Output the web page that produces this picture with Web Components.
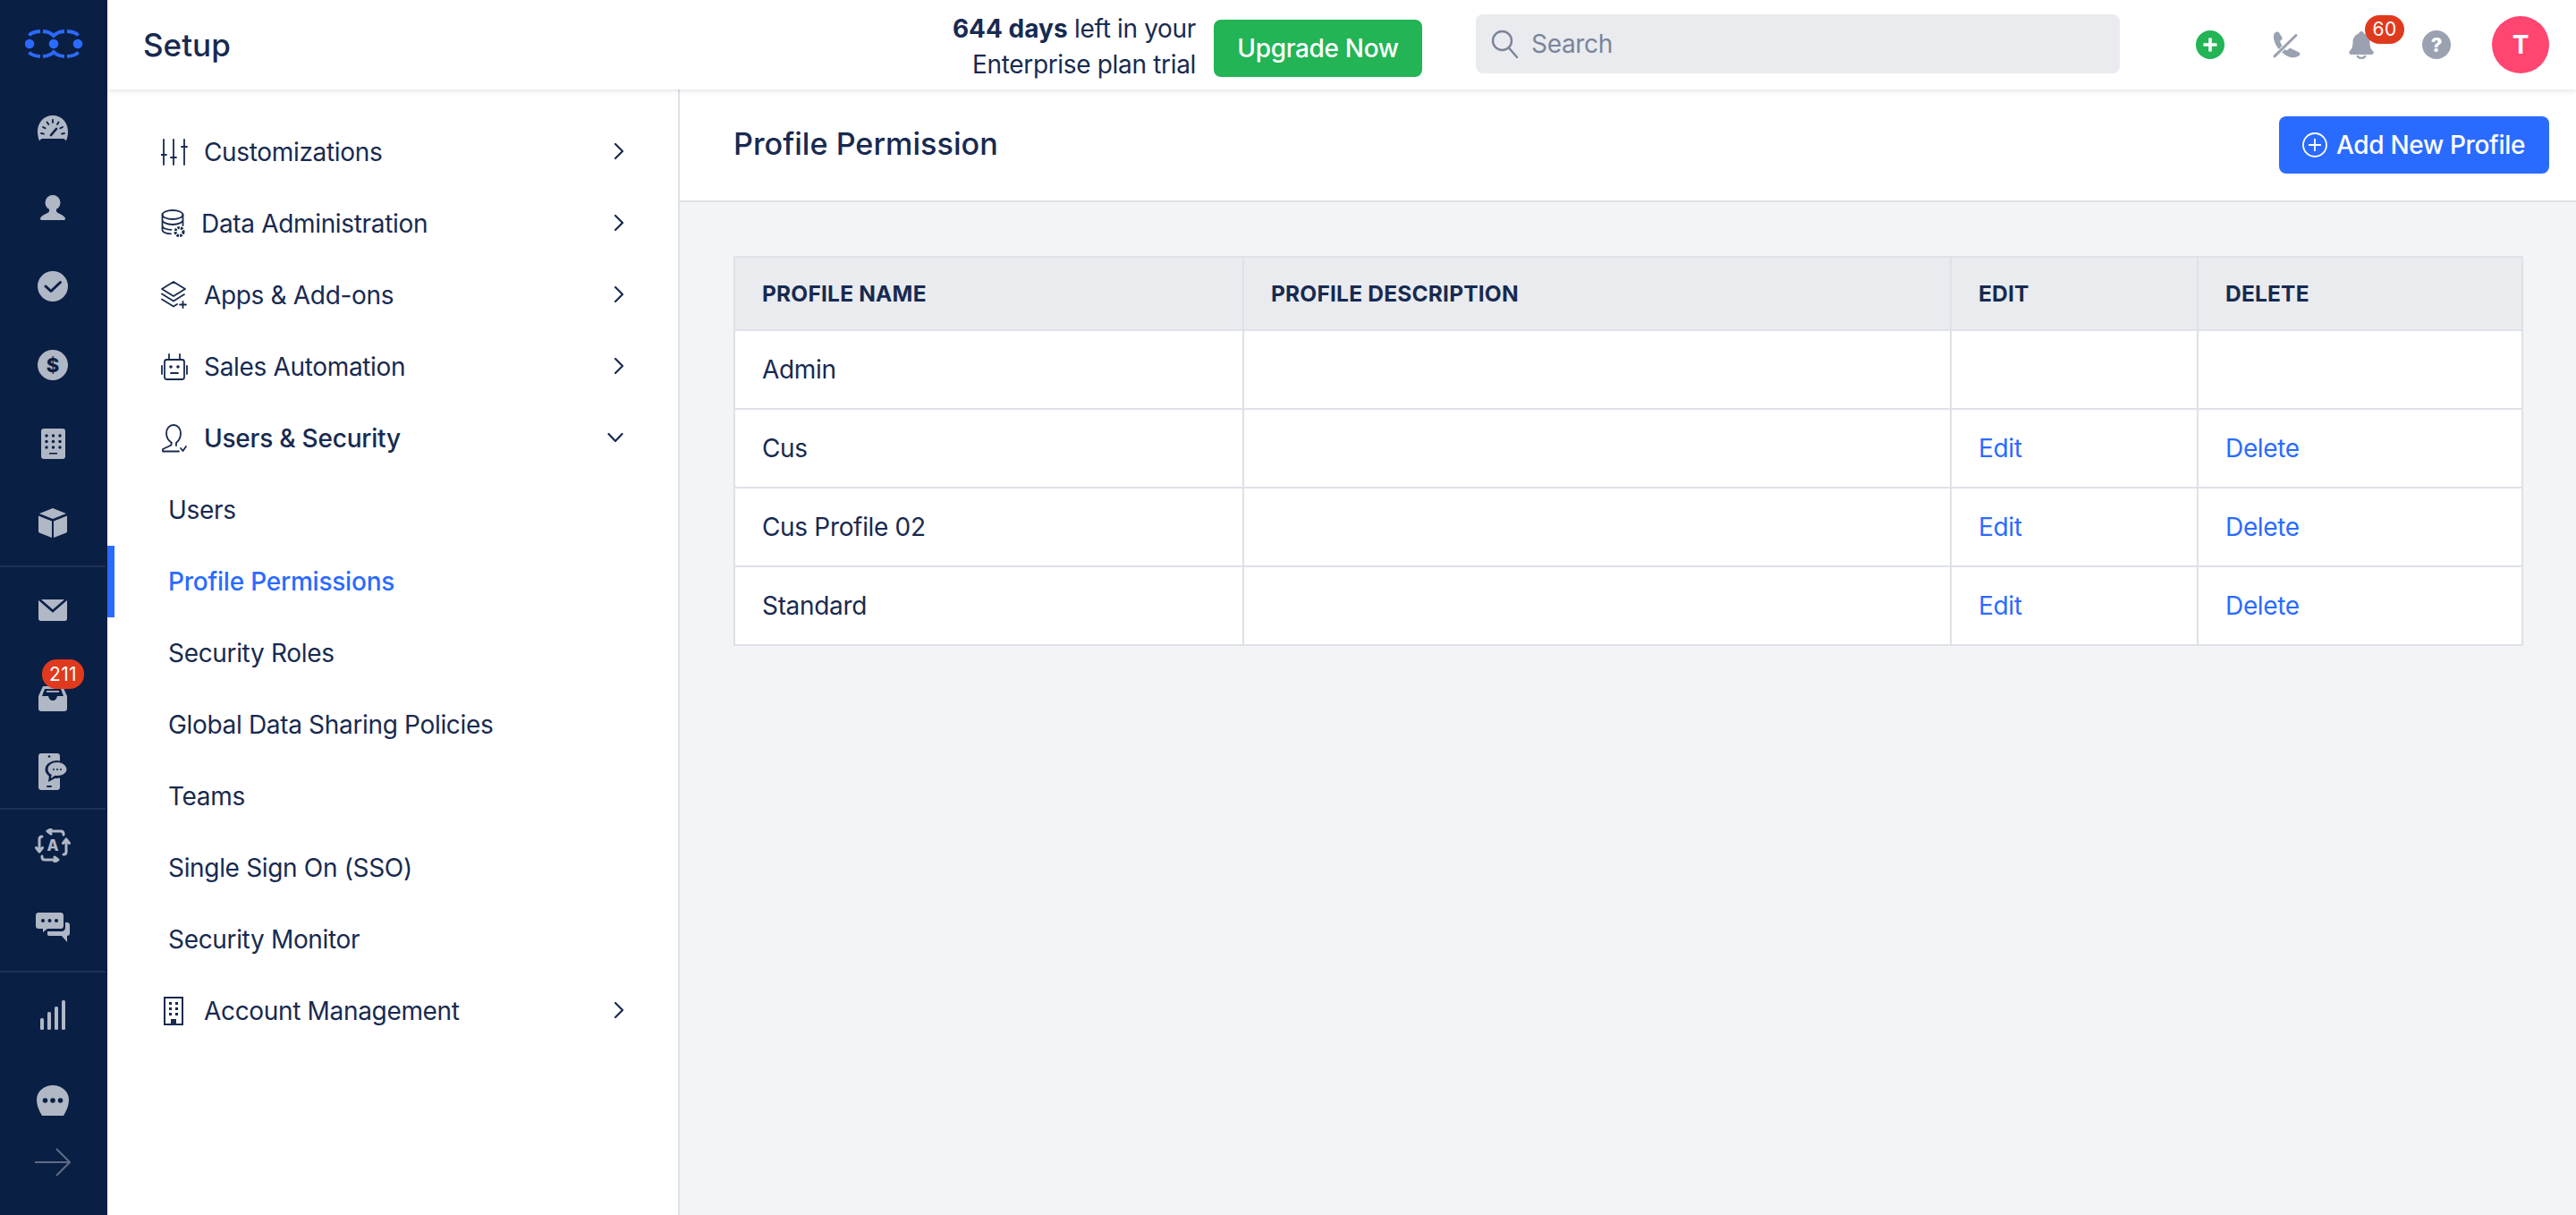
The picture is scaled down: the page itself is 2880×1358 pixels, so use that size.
<!DOCTYPE html>
<html lang="en">
<head>
<meta charset="utf-8">
<title>Profile Permission</title>
<style>
    html, body { margin: 0; height: 100%; }
    body { font-family: Inter, "Liberation Sans", sans-serif; color: #182a50; overflow: hidden; }
</style>
</head>
<body>
<crm-app>
    <crm-rail slot="rail"></crm-rail>
    <top-bar slot="top"></top-bar>
    <setup-nav slot="nav"></setup-nav>
    <page-head slot="main" heading="Profile Permission" action="Add New Profile"></page-head>
    <profile-table slot="main"></profile-table>
</crm-app>

<script>
// Icons drawn at their real pixel size.
const G = '#b0b7c5', D = '#0a1f44', S = '#182a50';
const line = `fill="none" stroke="${S}" stroke-width="1.8" stroke-linecap="round" stroke-linejoin="round"`;
const ICONS = {
    logo: `<svg width="66" height="34" viewBox="0 0 66 34"><g fill="#2a6bff"><circle cx="5" cy="17" r="5.300"/><circle cx="32" cy="17" r="5.300"/><circle cx="59" cy="17" r="5.300"/></g><g fill="none" stroke="#2a6bff" stroke-width="3.800"><path d="M4.500 7.500Q8 3.500 17 3M20 3Q28 3.500 32 8Q36 3.500 44 3M47 3Q56 3.500 59.500 7.500"/><path d="M4.500 26.500Q8 30.500 17 31M20 31Q28 30.500 32 26Q36 30.500 44 31M47 31Q56 30.500 59.500 26.500"/></g></svg>`,
    gauge: `<svg width="34" height="30" viewBox="0 0 34 30"><path fill="${G}" d="M17 0C7 0 0 8 0 18c0 4 .8 7 2 10.500 1-1.500 2-2.500 3.500-2.500h23c1.500 0 2.500 1 3.500 2.500C33.200 25 34 22 34 18 34 8 27 0 17 0z"/><path fill="none" stroke="${D}" stroke-width="1.800" stroke-linecap="round" d="M4 20l3 .6M6 13l2.600 1.400M10.500 7.500l1.800 2.500M17 5v3M23.500 7.500L22 10M28 13l-2.600 1.400M30 20l-3 .6"/><path fill="none" stroke="${D}" stroke-width="2.600" stroke-linecap="round" d="M15 22l6-7"/></svg>`,
    person: `<svg width="28" height="28" viewBox="0 0 28 28"><ellipse fill="${G}" cx="14" cy="8.500" rx="8.500" ry="8.500"/><path fill="${G}" d="M10 15h8v3c0 2 7 3.500 9.500 7 .8 1.300.5 3-1 3H1.500c-1.500 0-1.800-1.700-1-3C3 21.500 10 20 10 18z"/></svg>`,
    check: `<svg width="34" height="34" viewBox="0 0 34 34"><circle cx="17" cy="17" r="17" fill="${G}"/><path d="M9 17l6 5.500L25.500 12.500" fill="none" stroke="${D}" stroke-width="3" stroke-linecap="round" stroke-linejoin="round"/></svg>`,
    dollar: `<svg width="34" height="34" viewBox="0 0 34 34"><circle cx="17" cy="17" r="17" fill="${G}"/><text x="17" y="25" text-anchor="middle" font-family="Inter" font-weight="800" font-size="22" fill="${D}">$</text></svg>`,
    calc: `<svg width="27" height="34" viewBox="0 0 27 34"><rect width="27" height="34" rx="3" fill="${G}"/><g fill="${D}"><circle cx="6" cy="8" r="1.700"/><circle cx="13.500" cy="8" r="1.700"/><circle cx="21" cy="8" r="1.700"/><circle cx="6" cy="14.500" r="1.700"/><circle cx="13.500" cy="14.500" r="1.700"/><circle cx="21" cy="14.500" r="1.700"/><circle cx="6" cy="21" r="1.700"/><circle cx="13.500" cy="21" r="1.700"/><circle cx="21" cy="21" r="1.700"/><rect x="9" y="27" width="9" height="1.600"/></g></svg>`,
    box: `<svg width="32" height="33" viewBox="0 0 32 33"><path fill="${G}" d="M16 0l15 6-15 6L1 6zM0 8.500l15 6V33L1 27.500c-.6-.2-1-.8-1-1.500zM32 8.500l-15 6V33l14-5.500c.6-.2 1-.8 1-1.500z"/></svg>`,
    mail: `<svg width="32" height="24" viewBox="0 0 32 24"><path fill="${G}" d="M2 0h28c1.200 0 2 .8 2 2v19.500c0 1.400-1.100 2.500-2.500 2.500h-27C1.100 24 0 22.900 0 21.500V2c0-1.200.8-2 2-2z"/><path d="M1 0L16 13 31 0" fill="none" stroke="${D}" stroke-width="2.600"/></svg>`,
    inbox: `<svg width="32" height="28" viewBox="0 0 32 28"><path fill="${G}" d="M5 0h22l5 11v14c0 1.700-1.300 3-3 3H3c-1.700 0-3-1.300-3-3V11z"/><path fill="${D}" d="M7 3h18l3 8h-7c-.5 3-2.500 5-5 5s-4.500-2-5-5H4z"/><rect x="9" y="5" width="14" height="1.800" fill="${G}"/></svg>`,
    phonechat: `<svg width="32" height="41" viewBox="0 0 32 41"><path fill="${G}" d="M3 0h18c1.700 0 3 1.300 3 3v35c0 1.700-1.300 3-3 3H3c-1.700 0-3-1.300-3-3V3c0-1.700 1.300-3 3-3z"/><circle cx="12" cy="3.500" r="1.300" fill="${D}"/><rect x="9" y="36" width="6" height="2" rx="1" fill="${D}"/><ellipse cx="20.500" cy="18" rx="13" ry="10" fill="${D}"/><path fill="${D}" d="M12 24l-1 8 9-5z"/><path fill="${G}" d="M21 10c-6 0-10.500 3.300-10.500 8 0 2.500 1.700 4.700 4.200 6l-.7 4 4.500-3.200c.8.100 1.700.2 2.500.2 6 0 10.500-3.300 10.500-7S27 10 21 10z"/><g fill="${D}"><circle cx="17" cy="18" r="1"/><circle cx="21" cy="18" r="1"/><circle cx="25" cy="18" r="1"/></g></svg>`,
    auto: `<svg width="40" height="38" viewBox="0 0 40 38"><g fill="none" stroke="${G}" stroke-width="3" stroke-linecap="round" stroke-linejoin="round"><path d="M14 3H29c2 0 3 1 3 3v1M14 3l4-2.500M14 3l4 3"/><path d="M26 35H11c-2 0-3-1-3-3v-1M26 35l-4 2.500M26 35l-4-3"/><path d="M5 26V12c0-2 1-3 3-3M5 26L1.500 21.500M5 26l3.500-4.500"/><path d="M35 12v14c0 2-1 3-3 3M35 12l-3.500 4.500M35 12l3.500 4.500"/></g><text x="20" y="25" text-anchor="middle" font-family="Inter" font-weight="800" font-size="17" fill="${G}">A</text></svg>`,
    chat: `<svg width="38" height="33" viewBox="0 0 38 33"><path fill="${G}" d="M3 0h25c1.700 0 3 1.300 3 3v12c0 1.700-1.300 3-3 3H13l-5 4v-4H3c-1.700 0-3-1.300-3-3V3c0-1.700 1.300-3 3-3z"/><g fill="${D}"><circle cx="8" cy="9" r="2"/><circle cx="15.500" cy="9" r="2"/><circle cx="23" cy="9" r="2"/></g><path fill="${G}" d="M33 11h2c1.700 0 3 1.300 3 3v9c0 1.700-1.300 3-3 3v7l-6-7H15c-.8 0-1.500-.3-2-1v-4h16c2.200 0 4-1.800 4-4z"/></svg>`,
    bars: `<svg width="28" height="33" viewBox="0 0 28 33" fill="${G}"><rect y="20" width="4" height="13" rx="1.500"/><rect x="8" y="13" width="4" height="20" rx="1.500"/><rect x="16" y="7" width="4" height="26" rx="1.500"/><rect x="24" y="0" width="4" height="33" rx="1.500"/></svg>`,
    more: `<svg width="36" height="34" viewBox="0 0 36 34"><path fill="${G}" d="M18 0c10 0 18 7 18 16 0 7-3 13-6 18H6C3 29 0 23 0 16 0 7 8 0 18 0z"/><g fill="${D}"><circle cx="9.500" cy="17" r="2.800"/><circle cx="18" cy="17" r="2.800"/><circle cx="26.500" cy="17" r="2.800"/></g></svg>`,
    arrow: `<svg width="40" height="32" viewBox="0 0 40 32"><path d="M0 16H39M24 1l15 15-15 15" fill="none" stroke="#5f6c85" stroke-width="2"/></svg>`,

    sliders: `<svg width="30" height="30" viewBox="0 0 30 30"><path ${line} d="M3 1v28M14 1v28M26 1v28M0 18h6M11 21h6M23 9h6"/></svg>`,
    database: `<svg width="28" height="32" viewBox="0 0 28 32"><g ${line}><ellipse cx="13" cy="6" rx="11.500" ry="5"/><path d="M1.500 6v17c0 2.500 4 4 9.500 4.300M24.500 6v12M1.500 12c0 2.500 5 5 11.500 5s11.500-2.500 11.500-5M1.500 18c0 2.500 4 4.500 10 4.800"/></g><circle cx="20.500" cy="25" r="4.500" fill="none" stroke="${S}" stroke-width="3" stroke-dasharray="2.500 1.200"/></svg>`,
    layers: `<svg width="30" height="32" viewBox="0 0 30 32"><g ${line}><path d="M14 1L27 9 14 17 1 9zM1 14.500l13 8 12-7.400M1 20.500l13 8 4-2.500M24.500 23v7M21 26.500h7"/></g></svg>`,
    robot: `<svg width="30" height="32" viewBox="0 0 30 32"><g ${line}><rect x="4" y="8" width="22" height="22" rx="2.500"/><path d="M9 8V2M21 8V2M1 15v9M29 15v9M11 23h8"/></g><circle cx="11" cy="16" r="1.800" fill="${S}"/><circle cx="19" cy="16" r="1.800" fill="${S}"/></svg>`,
    user: `<svg width="30" height="32" viewBox="0 0 30 32"><g ${line}><path d="M12 21c-3-2-6-6-6-11C6 5 9.500 1 14 1s8 4 8 9c0 5-2.500 9-5 11v3M11.500 21v2.500L2 28v2.500h18"/><path d="M22 27l2.500 3 3.500-5"/></g></svg>`,
    building: `<svg width="22" height="32" viewBox="0 0 22 32"><rect x="1" y="1" width="20" height="30" fill="none" stroke="${S}" stroke-width="2"/><g fill="${S}"><rect x="6" y="6" width="3" height="3"/><rect x="13" y="6" width="3" height="3"/><rect x="6" y="12" width="3" height="3"/><rect x="13" y="12" width="3" height="3"/><rect x="6" y="18" width="3" height="3"/><rect x="13" y="18" width="3" height="3"/><rect x="8" y="25" width="6" height="6"/></g></svg>`,
    right: `<svg width="12" height="20" viewBox="0 0 12 20"><path d="M2 2l8 8-8 8" fill="none" stroke="${S}" stroke-width="2.200" stroke-linecap="round" stroke-linejoin="round"/></svg>`,
    down: `<svg width="18" height="12" viewBox="0 0 18 12"><path d="M1.500 2L9 10l7.500-8" fill="none" stroke="${S}" stroke-width="2.200" stroke-linecap="round" stroke-linejoin="round"/></svg>`,

    search: `<svg width="30" height="32" viewBox="0 0 30 32"><circle cx="12.500" cy="12.500" r="10.500" fill="none" stroke="#7b8499" stroke-width="2.400"/><path d="M20 20.500L29 31" fill="none" stroke="#7b8499" stroke-width="2.400" stroke-linecap="round"/></svg>`,
    plus: `<svg width="32" height="32" viewBox="0 0 32 32"><circle cx="16" cy="16" r="16" fill="#22b455"/><path d="M16 8.500v15M8.500 16h15" stroke="#fff" stroke-width="3.600"/></svg>`,
    call: `<svg width="31" height="30" viewBox="0 0 31 30"><path fill="#9aa1b1" d="M2 2C3.500.5 6-.2 7 1.500L10.500 7C11 8 10.500 9 9.500 9.800L8 11C9 14 12 19 15.500 21.500L18 19.500C19 18.800 20 19 21 19.500L29.500 23.500C31 24.500 30.500 26.500 29 27.500 25 30 20 30 15 27 8 23 3 16 1.500 10 .8 7 .5 4 2 2z"/><path d="M1 29L26 4.500" stroke="#fff" stroke-width="5"/><path d="M2 27.800L26 4.500" stroke="#9aa1b1" stroke-width="3" stroke-linecap="round"/></svg>`,
    bell: `<svg width="28" height="31" viewBox="0 0 28 31"><path fill="#9aa1b1" d="M14 0c1.500 0 2.500 1 3 2.500 4.500 1.500 6.500 5.500 6.500 10 0 5 1.500 7.500 3.500 9.500 1.300 1.300.7 4-1.500 4H2.500C.3 26-.3 23.300 1 22c2-2 3.500-4.500 3.500-9.500 0-4.500 2-8.500 6.500-10C11.500 1 12.500 0 14 0z"/><path fill="none" stroke="#9aa1b1" stroke-width="2.400" d="M9.500 27c.5 2 2.300 3 4.500 3s4-1 4.500-3"/></svg>`,
    help: `<svg width="32" height="32" viewBox="0 0 32 32"><circle cx="16" cy="16" r="16" fill="#9aa1b1"/><text x="16" y="24" text-anchor="middle" font-family="Inter" font-weight="800" font-size="22" fill="#fff">?</text></svg>`,
    addcircle: `<svg width="28" height="28" viewBox="0 0 28 28"><circle cx="14" cy="14" r="13" fill="none" stroke="#fff" stroke-width="1.800"/><path d="M14 7v14M7 14h14" stroke="#fff" stroke-width="1.800"/></svg>`
};

class CrmApp extends HTMLElement {
    constructor() {
        super();
        this.attachShadow({ mode: 'open' });
        this.shadowRoot.innerHTML = `
            <style>
                :host { display: grid; grid-template-columns: 120px 1fr; height: 1358px; }
                .rail { grid-row: 1 / 2; min-height: 0; }
                .right { display: flex; flex-direction: column; min-width: 0; }
                .top { position: relative; z-index: 2; }
                .body { flex: 1; display: flex; min-height: 0; }
                .main { flex: 1; background: #f3f4f6; min-width: 0; }
            </style>
            <div class="rail"><slot name="rail"></slot></div>
            <div class="right">
                <div class="top"><slot name="top"></slot></div>
                <div class="body">
                    <slot name="nav"></slot>
                    <div class="main"><slot name="main"></slot></div>
                </div>
            </div>
        `;
    }
}

class AppBadge extends HTMLElement {
    constructor() {
        super();
        this.attachShadow({ mode: 'open' });
        this.shadowRoot.innerHTML = `
            <style>
                :host {
                    position: absolute; display: flex; align-items: center; justify-content: center;
                    background: #e03a1e; color: #fff; border-radius: 16px; height: 32px;
                    font-size: 21px; letter-spacing: .3px;
                }
            </style>
            <slot></slot>
        `;
    }
}

class RailItem extends HTMLElement {
    constructor() {
        super();
        this.attachShadow({ mode: 'open' });
    }

    connectedCallback() {
        this.shadowRoot.innerHTML = `
            <style>
                :host { position: relative; display: flex; height: 72px; align-items: center; justify-content: center; }
                svg { display: block; }
            </style>
            ${ICONS[this.getAttribute('icon')]}
            <slot></slot>
        `;
    }
}

class CrmRail extends HTMLElement {
    constructor() {
        super();
        this.attachShadow({ mode: 'open' });
        this.shadowRoot.innerHTML = `
            <style>
                :host { display: flex; flex-direction: column; height: 1358px; background: #0a1f44; font-family: Inter, sans-serif; }
                .logo { height: 100px; display: flex; align-items: center; padding-left: 28px; box-sizing: border-box; }
                .logo svg { display: block; margin-top: -2px; }
                .group { display: flex; flex-direction: column; width: 118px; border-bottom: 2px solid #1f3254; }
                .last { border-bottom: 0; }
                .a { padding: 8px 0 12px; gap: 16px; }
                .b { padding: 12px 0 5px; }
                .c { padding: 4px 0 13px; }
                .d { padding-top: 11px; }
            </style>
            <div class="logo">${ICONS.logo}</div>
            <div class="group a">
                <rail-item icon="gauge"></rail-item>
                <rail-item icon="person"></rail-item>
                <rail-item icon="check"></rail-item>
                <rail-item icon="dollar"></rail-item>
                <rail-item icon="calc"></rail-item>
                <rail-item icon="box"></rail-item>
            </div>
            <div class="group b">
                <rail-item icon="mail"></rail-item>
                <rail-item icon="inbox" style="margin-top:27px"><app-badge style="left:47px;top:-8px;width:47px;height:33px">211</app-badge></rail-item>
                <rail-item icon="phonechat" style="margin-top:9px"></rail-item>
            </div>
            <div class="group c">
                <rail-item icon="auto"></rail-item>
                <rail-item icon="chat" style="margin-top:19px"></rail-item>
            </div>
            <div class="group d last">
                <rail-item icon="bars"></rail-item>
                <rail-item icon="more" style="margin-top:24px"></rail-item>
                <rail-item icon="arrow" style="margin-top:-3px"></rail-item>
            </div>
        `;
    }
}

class TopBar extends HTMLElement {
    constructor() {
        super();
        this.attachShadow({ mode: 'open' });
        this.shadowRoot.innerHTML = `
            <style>
                :host {
                    display: flex; align-items: center; height: 100px; background: #fff;
                    box-shadow: 0 2px 5px rgba(20, 38, 75, .12); font-size: 28px; letter-spacing: -.33px;
                    padding: 0 30px 0 40px; box-sizing: border-box;
                }
                svg { display: block; }
                h1 { margin: 0; font-size: 35px; font-weight: 500; flex: 1; letter-spacing: 0; }
                .trial { text-align: right; line-height: 40px; margin-right: 20px; margin-top: 3px; }
                b { font-weight: 700; letter-spacing: 0; }
                .upgrade {
                    background: #22b455; color: #fff; height: 64px; width: 233px; border-radius: 8px;
                    display: flex; align-items: center; justify-content: center; font-weight: 500;
                    margin-top: 8px; margin-right: 60px;
                }
                .search {
                    width: 720px; height: 66px; background: #e9ebef; border-radius: 8px; margin-right: 85px;
                    display: flex; align-items: center; gap: 15px; padding-left: 17px; box-sizing: border-box;
                    color: #7b8499; margin-top: -2px;
                }
                .icons { display: flex; align-items: center; }
                .slot { position: relative; }
                .avatar {
                    width: 64px; height: 64px; border-radius: 50%; background: #ff4570; color: #fff;
                    display: flex; align-items: center; justify-content: center; font-weight: 700; font-size: 28px;
                }
            </style>
            <h1>Setup</h1>
            <div class="trial"><b>644 days</b> left in your<br>Enterprise plan trial</div>
            <div class="upgrade">Upgrade Now</div>
            <div class="search">${ICONS.search}<span>Search</span></div>
            <div class="icons">
                <div class="slot" style="margin-right:54px">${ICONS.plus}</div>
                <div class="slot" style="margin-right:54px">${ICONS.call}</div>
                <div class="slot" style="margin-right:54px">${ICONS.bell}<app-badge style="left:18px;top:-18px;width:44px">60</app-badge></div>
                <div class="slot" style="margin-right:46px">${ICONS.help}</div>
                <div class="avatar">T</div>
            </div>
        `;
    }
}

class NavItem extends HTMLElement {
    constructor() {
        super();
        this.attachShadow({ mode: 'open' });
    }

    connectedCallback() {
        const icon = this.getAttribute('icon');
        const caret = this.getAttribute('caret');
        this.shadowRoot.innerHTML = `
            <style>
                :host {
                    display: flex; align-items: center; height: 80px; box-sizing: border-box;
                    padding-left: 60px; padding-right: 60px; font-size: 28px; letter-spacing: -.33px;
                }
                :host([sub]) { padding-left: 68px; }
                :host([active]) { border-left: 8px solid #2a6bff; padding-left: 60px; color: #2a6bff; font-weight: 500; letter-spacing: -.22px; }
                :host([strong]) { font-weight: 500; letter-spacing: -.22px; }
                :host([caret="down"]) { padding-right: 61px; }
                .icon { width: 48px; flex: none; display: flex; align-items: center; }
                .icon svg, .caret svg { display: block; }
                .label { flex: 1; }
                .caret { flex: none; margin-top: -3px; }
            </style>
            ${icon ? `<span class="icon" style="${this.getAttribute('iconstyle') || ''}">${ICONS[icon]}</span>` : ''}
            <span class="label"><slot></slot></span>
            ${caret ? `<span class="caret">${ICONS[caret]}</span>` : ''}
        `;
    }
}

class SetupNav extends HTMLElement {
    constructor() {
        super();
        this.attachShadow({ mode: 'open' });
        this.shadowRoot.innerHTML = `
            <style>
                :host {
                    display: block; flex: none; width: 640px; box-sizing: border-box; background: #fff;
                    border-right: 2px solid #dfe1e8; padding-top: 30px;
                }
            </style>
            <nav-item icon="sliders" caret="right">Customizations</nav-item>
            <nav-item icon="database" caret="right" iconstyle="width:45px">Data Administration</nav-item>
            <nav-item icon="layers" caret="right">Apps &amp; Add-ons</nav-item>
            <nav-item icon="robot" caret="right">Sales Automation</nav-item>
            <nav-item icon="user" caret="down" strong>Users &amp; Security</nav-item>
            <nav-item sub>Users</nav-item>
            <nav-item sub active>Profile Permissions</nav-item>
            <nav-item sub>Security Roles</nav-item>
            <nav-item sub>Global Data Sharing Policies</nav-item>
            <nav-item sub>Teams</nav-item>
            <nav-item sub>Single Sign On (SSO)</nav-item>
            <nav-item sub>Security Monitor</nav-item>
            <nav-item icon="building" caret="right" iconstyle="padding-left:3px;width:45px">Account Management</nav-item>
        `;
    }
}

class PageHead extends HTMLElement {
    constructor() {
        super();
        this.attachShadow({ mode: 'open' });
    }

    connectedCallback() {
        this.shadowRoot.innerHTML = `
            <style>
                :host {
                    display: flex; align-items: center; justify-content: space-between; height: 126px;
                    box-sizing: border-box; background: #fff; border-bottom: 2px solid #dfe1e8;
                    padding: 0 30px 0 60px;
                }
                h2 { margin: 0; font-size: 34.200px; font-weight: 500; margin-top: -4px; }
                button {
                    display: flex; align-items: center; gap: 10px; height: 64px; width: 302px; padding: 0 0 0 26px;
                    box-sizing: border-box; border: 0; border-radius: 8px; background: #2a6bff; color: #fff;
                    font: 500 28px Inter, sans-serif; letter-spacing: -.33px;
                }
                svg { display: block; }
            </style>
            <h2>${this.getAttribute('heading')}</h2>
            <button>${ICONS.addcircle}${this.getAttribute('action')}</button>
        `;
    }
}

class ProfileTable extends HTMLElement {
    constructor() {
        super();
        this.attachShadow({ mode: 'open' });
        const rows = [
            ['Admin', false],
            ['Cus', true],
            ['Cus Profile 02', true],
            ['Standard', true]
        ].map(([name, canEdit]) => `
            <tr>
                <td>${name}</td>
                <td></td>
                <td>${canEdit ? '<a>Edit</a>' : ''}</td>
                <td>${canEdit ? '<a>Delete</a>' : ''}</td>
            </tr>`).join('');
        this.shadowRoot.innerHTML = `
            <style>
                :host { display: block; padding: 60px 30px 0 60px; }
                table {
                    width: 1999px; table-layout: fixed; border-collapse: collapse; background: #fff;
                    font-size: 28px; letter-spacing: -.33px;
                }
                th, td { border: 2px solid #dfe1e8; padding: 0 0 0 30px; text-align: left; box-sizing: border-box; }
                th {
                    height: 82px; background: #e9ebef; font-size: 24.500px; font-weight: 700;
                    text-transform: uppercase; letter-spacing: .2px;
                }
                td { height: 88px; }
                a { color: #2a6bff; }
            </style>
            <table>
                <colgroup><col style="width:569px"><col style="width:791px"><col style="width:276px"><col style="width:363px"></colgroup>
                <thead><tr><th>Profile Name</th><th>Profile Description</th><th>Edit</th><th>Delete</th></tr></thead>
                <tbody>${rows}</tbody>
            </table>
        `;
    }
}

customElements.define('app-badge', AppBadge);
customElements.define('rail-item', RailItem);
customElements.define('crm-rail', CrmRail);
customElements.define('top-bar', TopBar);
customElements.define('nav-item', NavItem);
customElements.define('setup-nav', SetupNav);
customElements.define('page-head', PageHead);
customElements.define('profile-table', ProfileTable);
customElements.define('crm-app', CrmApp);
</script>
</body>
</html>
